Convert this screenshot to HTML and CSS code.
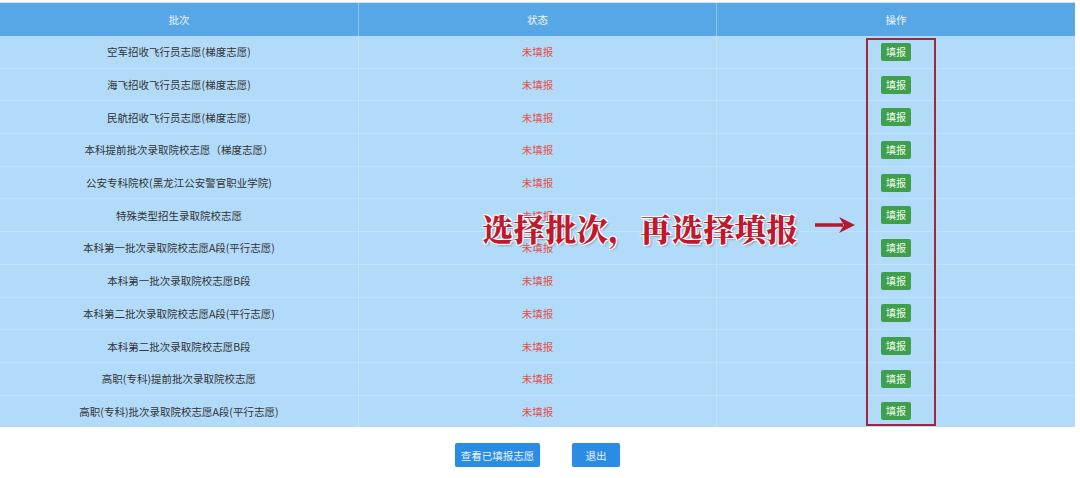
FILE: index.html
```html
<!DOCTYPE html>
<html lang="zh-CN">
<head>
  <meta charset="UTF-8" />
  <meta name="viewport" content="width=device-width, initial-scale=1.0" />
  <title>志愿填报</title>
  <link rel="stylesheet" href="styles.css">
</head>
<body>
  <div class="page">
    <div class="table-wrap">
      <table class="batch-table">
        <thead>
          <tr>
            <th>批次</th>
            <th>状态</th>
            <th>操作</th>
          </tr>
        </thead>
        <tbody>
          <tr><td>空军招收飞行员志愿(梯度志愿)</td><td class="status">未填报</td><td><button class="fill-btn">填报</button></td></tr>
          <tr><td>海飞招收飞行员志愿(梯度志愿)</td><td class="status">未填报</td><td><button class="fill-btn">填报</button></td></tr>
          <tr><td>民航招收飞行员志愿(梯度志愿)</td><td class="status">未填报</td><td><button class="fill-btn">填报</button></td></tr>
          <tr><td>本科提前批次录取院校志愿（梯度志愿）</td><td class="status">未填报</td><td><button class="fill-btn">填报</button></td></tr>
          <tr><td>公安专科院校(黑龙江公安警官职业学院)</td><td class="status">未填报</td><td><button class="fill-btn">填报</button></td></tr>
          <tr><td>特殊类型招生录取院校志愿</td><td class="status">未填报</td><td><button class="fill-btn">填报</button></td></tr>
          <tr><td>本科第一批次录取院校志愿A段(平行志愿)</td><td class="status">未填报</td><td><button class="fill-btn">填报</button></td></tr>
          <tr><td>本科第一批次录取院校志愿B段</td><td class="status">未填报</td><td><button class="fill-btn">填报</button></td></tr>
          <tr><td>本科第二批次录取院校志愿A段(平行志愿)</td><td class="status">未填报</td><td><button class="fill-btn">填报</button></td></tr>
          <tr><td>本科第二批次录取院校志愿B段</td><td class="status">未填报</td><td><button class="fill-btn">填报</button></td></tr>
          <tr><td>高职(专科)提前批次录取院校志愿</td><td class="status">未填报</td><td><button class="fill-btn">填报</button></td></tr>
          <tr><td>高职(专科)批次录取院校志愿A段(平行志愿)</td><td class="status">未填报</td><td><button class="fill-btn">填报</button></td></tr>
        </tbody>
      </table>

      <!-- hint overlay: box round the action column and a pointer -->
      <div class="hint-box"></div>
      <div class="hint-text">选择批次，再选择填报</div>
      <svg class="hint-arrow" width="44" height="20" viewBox="0 0 44 20">
        <path d="M2 10 H30" stroke="#b3192c" stroke-width="3.5" />
        <path d="M26 2 L42 10 L26 18 L31 10 Z" fill="#b3192c" />
      </svg>
    </div>

    <div class="actions">
      <button class="main-btn">查看已填报志愿</button>
      <button class="main-btn exit">退出</button>
    </div>
  </div>
</body>
</html>
```

FILE: styles.css
```css
body {
  margin: 0;
  padding: 0;
  background-color: #fff;
  font-family: "Noto Sans CJK SC", "Liberation Sans", sans-serif;
  color: #333;
}
.page {
  width: 1075px;
  padding-top: 2px;
}
.table-wrap {
  position: relative;
  border-top: 1px solid #c9e6fb;
}
.batch-table {
  width: 100%;
  border-collapse: collapse;
  table-layout: fixed;
  font-size: 10.5px;
}
.batch-table th {
  height: 33px;
  padding: 0;
  background-color: #57a7e7;
  color: #eef6fd;
  font-weight: normal;
  border-left: 1px solid #8cc6f2;
}
.batch-table td {
  height: 31.7px;
  padding: 0;
  text-align: center;
  background-color: #b2dbfa;
  border-left: 1px solid #c4e3fb;
  border-top: 1px solid #bfe1fb;
}
.batch-table th:first-child,
.batch-table td:first-child {
  border-left: none;
}
.batch-table tbody tr:first-child td {
  border-top: none;
}
.status {
  color: #e3504a;
}
.fill-btn {
  width: 30px;
  height: 18px;
  padding: 0;
  border: none;
  border-radius: 2px;
  background-color: #3f9f4d;
  color: #f2fff2;
  font-family: inherit;
  font-size: 10px;
  line-height: 18px;
  vertical-align: middle;
}
.hint-box {
  position: absolute;
  left: 866px;
  top: 35px;
  width: 66px;
  height: 384px;
  border: 2px solid #9e2740;
}
.hint-text {
  position: absolute;
  left: 482px;
  top: 202px;
  font-family: "Noto Serif CJK SC", "Noto Sans CJK SC", serif;
  font-size: 31px;
  font-weight: 900;
  color: #c0182e;
  letter-spacing: 0.6px;
  text-shadow: 1px 1px 0 #fff, -1px -1px 0 #fff, 1px -1px 0 #fff, -1px 1px 0 #fff, 2px 2px 2px rgba(0, 0, 0, 0.25);
}
.hint-arrow {
  position: absolute;
  left: 813px;
  top: 212px;
}
.actions {
  display: flex;
  justify-content: center;
  gap: 32px;
  margin-top: 16px;
}
.main-btn {
  width: 85px;
  height: 24px;
  padding: 0;
  border: none;
  border-radius: 2px;
  background-color: #2b8ce4;
  color: #eaf4ff;
  font-family: inherit;
  font-size: 10.5px;
  box-shadow: 0 1px 2px rgba(0, 0, 0, 0.15);
}
.main-btn.exit {
  width: 48px;
}
```
